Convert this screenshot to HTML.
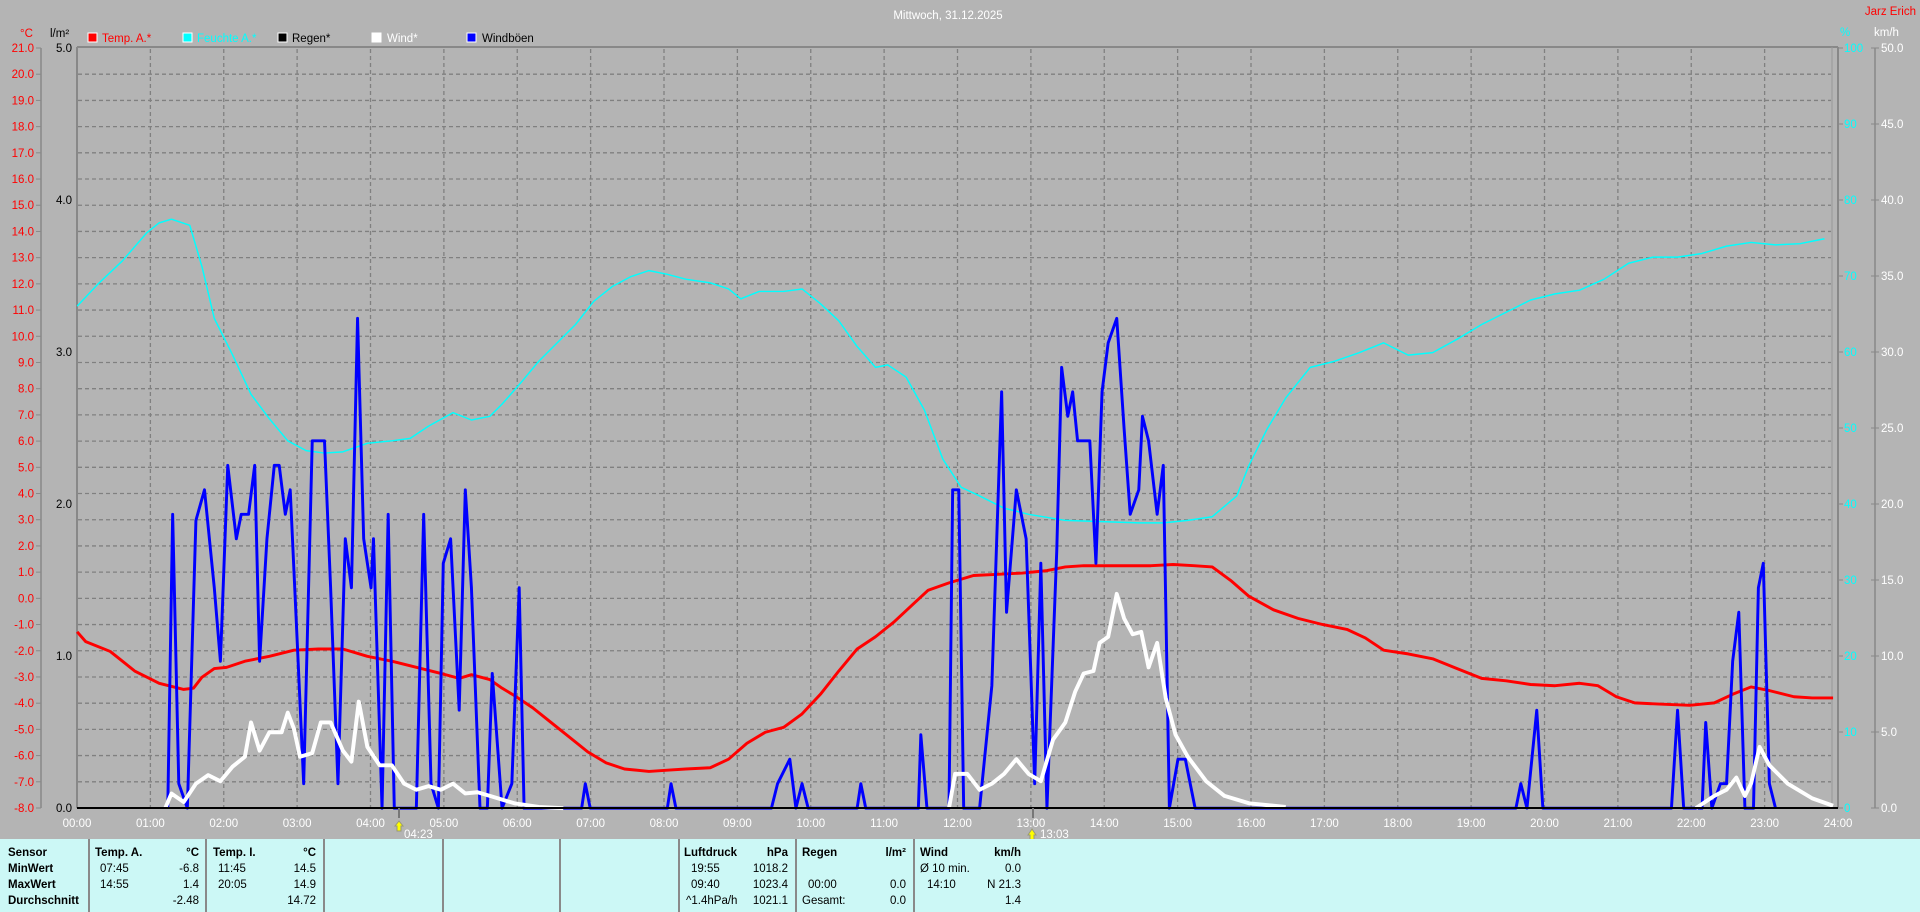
<!DOCTYPE html>
<html><head><meta charset="utf-8"><style>
body{margin:0;width:1920px;height:912px;background:#b4b4b4;overflow:hidden;font-family:"Liberation Sans",sans-serif;font-size:11.5px}
svg text{font-family:"Liberation Sans",sans-serif;font-size:11.5px}
#tbl{position:absolute;left:0;top:839px;width:1920px;height:73px;background:#ccf8f6}
.t{position:absolute;white-space:nowrap;font-size:11.5px;color:#000}
.b{font-weight:bold}
.r{text-align:right}
.d{position:absolute;top:0;width:2px;height:73px;background:#8a8a8a}
</style></head><body>
<svg width="1920" height="840" style="position:absolute;left:0;top:0">
<g id="grid" stroke="#808080" stroke-width="1.3" stroke-dasharray="4,3" fill="none"></g>
<g id="labs"></g>
<text x="948" y="19" fill="#fff" text-anchor="middle" font-size="13">Mittwoch, 31.12.2025</text>
<text x="1916" y="15" fill="#f00" text-anchor="end">Jarz Erich</text>
<text x="20" y="37" fill="#f00">°C</text>
<text x="50" y="37" fill="#000">l/m²</text>
<text x="1840" y="36" fill="#0ff">%</text>
<text x="1874" y="36" fill="#fff">km/h</text>
<rect x="88" y="33" width="9" height="9" fill="#f00" stroke="#fff"/><text x="102" y="42" fill="#f00">Temp. A.*</text>
<rect x="183" y="33" width="9" height="9" fill="#0ff" stroke="#fff"/><text x="197" y="42" fill="#0ff">Feuchte A.*</text>
<rect x="278" y="33" width="9" height="9" fill="#000" stroke="#fff"/><text x="292" y="42" fill="#000">Regen*</text>
<rect x="372" y="33" width="9" height="9" fill="#fff" stroke="#fff"/><text x="387" y="42" fill="#fff">Wind*</text>
<rect x="467" y="33" width="9" height="9" fill="#00f" stroke="#fff"/><text x="482" y="42" fill="#000">Windböen</text>
<line x1="77" y1="47" x2="1838" y2="47" stroke="#888" stroke-width="2"/>
<line x1="77" y1="47" x2="77" y2="808" stroke="#888" stroke-width="2"/>
<line x1="1838" y1="47" x2="1838" y2="808" stroke="#888" stroke-width="2"/>
<line x1="1832" y1="47" x2="1832" y2="808" stroke="#999" stroke-width="1"/>
<line x1="41" y1="48" x2="41" y2="808" stroke="#888" stroke-width="1.5"/>
<line x1="1875" y1="48" x2="1875" y2="808" stroke="#888" stroke-width="1.5"/>
<g transform="scale(1.2245)" fill="none" stroke-linejoin="round">
<polyline stroke="#0ff" stroke-width="1.2" points="63,250 80,232 100,213 120,190 130,182 140,179 155,184 165,218 175,260 190,290 205,322 220,342 235,360 250,368 265,370 280,369 300,362 320,360 335,358 350,348 370,337 385,343 400,340 410,330 425,313 440,295 455,280 470,265 485,246 500,234 515,226 530,221 545,224 560,228 580,231 595,236 605,244 620,238 640,238 655,236 670,248 685,262 700,283 715,300 725,298 740,308 755,335 770,375 785,398 800,405 820,415 840,420 870,425 900,426 930,427 950,427 970,425 990,422 1010,405 1020,380 1035,350 1050,325 1070,300 1090,295 1110,288 1130,280 1150,290 1170,288 1190,277 1210,265 1230,255 1250,245 1270,240 1290,237 1310,228 1330,215 1350,210 1370,210 1390,207 1410,201 1430,198 1450,200 1470,199 1490,195"/>
<polyline stroke="#f00" stroke-width="2.4" points="63,516 70,524 90,532 110,548 130,558 150,563 158,562 165,553 175,546 185,545 200,540 220,536 240,531 260,530 280,530 300,536 320,540 340,545 360,550 375,554 385,551 400,555 410,562 420,568 435,578 450,590 465,602 480,614 495,623 510,628 530,630 545,629 560,628 580,627 595,620 610,607 625,598 640,594 655,583 670,567 685,548 700,530 715,520 730,508 745,494 758,482 775,476 795,470 815,469 835,468 855,466 870,463 885,462 900,462 920,462 940,462 958,461 975,462 990,463 1005,474 1020,487 1040,498 1060,505 1080,510 1100,514 1115,521 1130,531 1150,534 1170,538 1190,546 1210,554 1230,556 1250,559 1270,560 1290,558 1305,560 1320,569 1335,574 1355,575 1380,576 1400,574 1415,567 1430,561 1445,564 1465,569 1480,570 1497,570"/>
<polyline stroke="#00f" stroke-width="2.4" points="137,660 141,420 146,640 153,660 160,425 167,400 175,480 180,540 186,380 193,440 197,420 203,420 208,380 212,540 218,440 224,380 228,380 233,420 237,400 243,530 248,640 255,360 265,360 270,480 276,640 282,440 287,480 292,260 297,440 303,480 305,440 312,660 317,420 322,660 340,660 346,420 352,640 358,660 362,460 368,440 375,580 380,400 385,480 392,660 398,660 402,550 410,660 418,640 424,480 428,660 475,660 478,640 482,660 545,660 548,640 552,660 630,660 635,640 645,620 650,660 655,640 660,660 700,660 703,640 707,660 750,660 752,600 757,660 775,660 778,400 783,400 787,660 800,660 810,560 818,320 822,500 830,400 838,440 845,640 850,460 855,660 863,450 867,300 872,340 876,320 880,360 890,360 895,460 900,320 905,280 912,260 918,350 923,420 930,400 933,340 938,360 945,420 950,380 955,660 962,620 968,620 972,640 976,660 1238,660 1242,640 1247,660 1255,580 1260,660 1365,660 1370,580 1375,660 1390,660 1393,590 1398,660 1405,640 1410,640 1415,540 1420,500 1425,660 1432,660 1436,480 1440,460 1445,640 1450,660"/>
<polyline stroke="#fff" stroke-width="3.2" points="135,660 140,648 150,655 160,640 170,633 180,638 190,626 200,618 205,590 212,613 220,598 230,598 235,582 240,595 245,618 255,615 262,590 270,590 280,613 287,622 293,573 300,610 310,625 320,625 330,640 340,645 350,642 360,645 370,640 380,648 390,647 400,650 420,656 440,659 460,660"/>
<polyline stroke="#fff" stroke-width="3.2" points="775,660 780,632 790,632 800,645 810,640 820,632 830,620 840,632 850,638 860,604 870,590 878,565 885,550 893,548 898,525 905,520 912,485 918,505 925,518 932,516 938,545 945,525 952,570 960,600 970,618 985,638 1000,650 1020,656 1050,659"/>
<polyline stroke="#fff" stroke-width="3.2" points="1385,660 1400,650 1410,645 1418,635 1425,650 1430,640 1437,610 1445,625 1460,640 1480,652 1497,658"/>
</g>
<line x1="77" y1="808" x2="1838" y2="808" stroke="#000" stroke-width="2"/>
<line x1="399" y1="808" x2="399" y2="818" stroke="#777" stroke-width="2"/>
<line x1="1033" y1="808" x2="1033" y2="818" stroke="#777" stroke-width="2"/>
<path d="M395 826 l4 -5 l4 5 l-2 0 l0 5 l-4 0 l0 -5z" fill="#ff0" stroke="#997"/>
<text x="404" y="838" fill="#fff">04:23</text>
<path d="M1028 835 l4 -6 l4 6 l-2 0 l0 5 l-4 0 l0 -5z" fill="#ff0" stroke="#997"/>
<text x="1040" y="838" fill="#fff">13:03</text>
</svg>
<div id="tbl">
<div class="d" style="left:88px"></div><div class="d" style="left:205px"></div><div class="d" style="left:323px"></div><div class="d" style="left:442px"></div><div class="d" style="left:559px"></div><div class="d" style="left:678px"></div><div class="d" style="left:795px"></div><div class="d" style="left:913px"></div>
<div class="t b" style="left:8px;top:8px">Sensor</div><div class="t b" style="left:8px;top:24px">MinWert</div><div class="t b" style="left:8px;top:40px">MaxWert</div><div class="t b" style="left:8px;top:56px">Durchschnitt</div>
<div class="t b" style="left:95px;top:8px">Temp. A.</div><div class="t b r" style="right:1721px;top:8px">°C</div>
<div class="t" style="left:100px;top:24px">07:45</div><div class="t r" style="right:1721px;top:24px">-6.8</div>
<div class="t" style="left:100px;top:40px">14:55</div><div class="t r" style="right:1721px;top:40px">1.4</div>
<div class="t r" style="right:1721px;top:56px">-2.48</div>
<div class="t b" style="left:213px;top:8px">Temp. I.</div><div class="t b r" style="right:1604px;top:8px">°C</div>
<div class="t" style="left:218px;top:24px">11:45</div><div class="t r" style="right:1604px;top:24px">14.5</div>
<div class="t" style="left:218px;top:40px">20:05</div><div class="t r" style="right:1604px;top:40px">14.9</div>
<div class="t r" style="right:1604px;top:56px">14.72</div>
<div class="t b" style="left:684px;top:8px">Luftdruck</div><div class="t b r" style="right:1132px;top:8px">hPa</div>
<div class="t" style="left:691px;top:24px">19:55</div><div class="t r" style="right:1132px;top:24px">1018.2</div>
<div class="t" style="left:691px;top:40px">09:40</div><div class="t r" style="right:1132px;top:40px">1023.4</div>
<div class="t" style="left:686px;top:56px">^1.4hPa/h</div><div class="t r" style="right:1132px;top:56px">1021.1</div>
<div class="t b" style="left:802px;top:8px">Regen</div><div class="t b r" style="right:1014px;top:8px">l/m²</div>
<div class="t" style="left:808px;top:40px">00:00</div><div class="t r" style="right:1014px;top:40px">0.0</div>
<div class="t" style="left:802px;top:56px">Gesamt:</div><div class="t r" style="right:1014px;top:56px">0.0</div>
<div class="t b" style="left:920px;top:8px">Wind</div><div class="t b r" style="right:899px;top:8px">km/h</div>
<div class="t" style="left:920px;top:24px">Ø 10 min.</div><div class="t r" style="right:899px;top:24px">0.0</div>
<div class="t" style="left:927px;top:40px">14:10</div><div class="t r" style="right:899px;top:40px">N 21.3</div>
<div class="t r" style="right:899px;top:56px">1.4</div>
</div>
<script>
(function(){
var ns="http://www.w3.org/2000/svg",g=document.getElementById('grid'),L=document.getElementById('labs');
function el(p,tag,a,txt){var e=document.createElementNS(ns,tag);for(var k in a)e.setAttribute(k,a[k]);if(txt!=null)e.textContent=txt;p.appendChild(e);return e;}
var T0=48,B0=808,i,y,x,h;
for(i=0;i<=29;i++){y=T0+(B0-T0)*i/29;if(i>0&&i<29)el(g,'line',{x1:78,y1:y,x2:1831,y2:y});
el(L,'line',{x1:36,y1:y,x2:41,y2:y,stroke:'#888'});el(L,'text',{x:34,y:y+4,fill:'#f00','text-anchor':'end'},(21-i).toFixed(1));}
for(h=1;h<24;h++){x=77+h*73.375;el(g,'line',{x1:x,y1:49,x2:x,y2:807});}
for(h=0;h<=24;h++){x=77+h*73.375;el(L,'text',{x:x,y:827,fill:'#fff','text-anchor':'middle'},(h<10?'0':'')+h+':00');}
for(i=0;i<=5;i++){y=T0+(B0-T0)*i/5;el(L,'text',{x:72,y:y+4,fill:'#000','text-anchor':'end'},(5-i).toFixed(1));}
for(i=0;i<=10;i++){y=T0+(B0-T0)*i/10;el(L,'line',{x1:1838,y1:y,x2:1843,y2:y,stroke:'#888'});el(L,'text',{x:1844,y:y+4,fill:'#0ff'},String(100-i*10));
el(L,'line',{x1:1871,y1:y,x2:1879,y2:y,stroke:'#888'});el(L,'text',{x:1881,y:y+4,fill:'#fff'},(50-i*5).toFixed(1));}
})();
</script>
</body></html>
